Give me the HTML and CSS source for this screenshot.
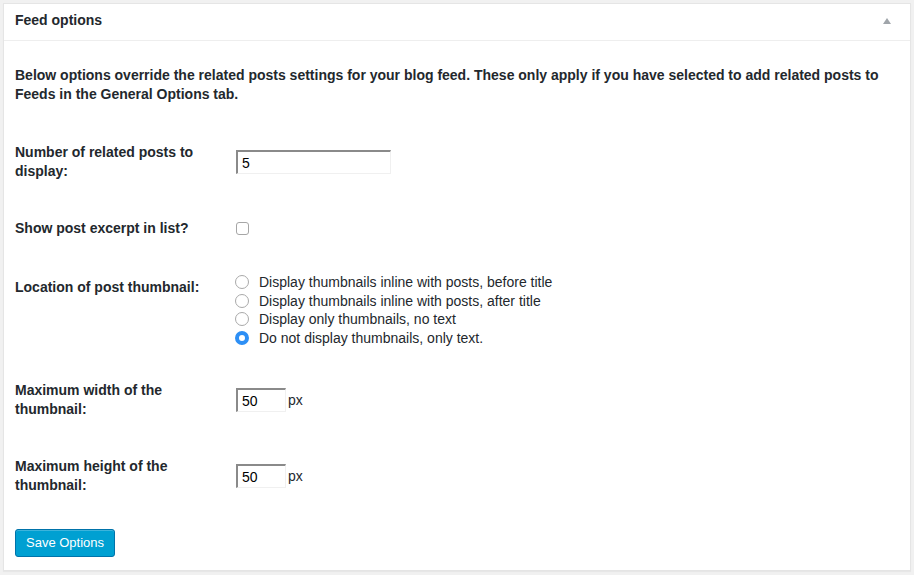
FILE: index.html
```html
<!DOCTYPE html>
<html>
<head>
<meta charset="utf-8">
<title>Feed options</title>
<link rel="stylesheet" href="styles.css">
</head>
<body>
<div class="postbox">
  <div class="hndle">
    <h3 class="hndle-title">Feed options</h3>
    <svg class="toggle" width="8" height="6" viewBox="0 0 8 6"><polygon points="4,0 8,6 0,6" fill="#a0a5aa"/></svg>
  </div>
  <div class="inside">
    <p class="desc">Below options override the related posts settings for your blog feed. These only apply if you have selected to add related posts to Feeds in the General Options tab.</p>
    <div class="form-table">
      <div class="row">
        <div class="label">Number of related posts to display:</div>
        <div class="field"><input class="text wide" type="text" value="5"></div>
      </div>
      <div class="row">
        <div class="label">Show post excerpt in list?</div>
        <div class="field"><span class="checkbox"></span></div>
      </div>
      <div class="row row-top">
        <div class="label label-offset">Location of post thumbnail:</div>
        <div class="field radios">
          <div class="radio-line"><span class="radio"></span>Display thumbnails inline with posts, before title</div>
          <div class="radio-line"><span class="radio"></span>Display thumbnails inline with posts, after title</div>
          <div class="radio-line"><span class="radio"></span>Display only thumbnails, no text</div>
          <div class="radio-line"><span class="radio checked"></span>Do not display thumbnails, only text.</div>
        </div>
      </div>
      <div class="row">
        <div class="label">Maximum width of the thumbnail:</div>
        <div class="field"><input class="text small" type="text" value="50"><span class="unit">px</span></div>
      </div>
      <div class="row">
        <div class="label">Maximum height of the thumbnail:</div>
        <div class="field"><input class="text small" type="text" value="50"><span class="unit">px</span></div>
      </div>
    </div>
    <button class="button-primary">Save Options</button>
  </div>
</div>
</body>
</html>
```
FILE: styles.css
```css
html, body {
  margin: 0;
  padding: 0;
}
body {
  background: #f1f1f1;
  font-family: "Liberation Sans", Arial, sans-serif;
  color: #23282d;
  font-size: 14px;
}
.postbox {
  margin: 3px 3px 4px 3px;
  background: #fff;
  border: 1px solid #e5e5e5;
  box-shadow: 0 1px 1px rgba(0,0,0,0.04);
}
.hndle {
  display: flex;
  align-items: center;
  justify-content: space-between;
  padding: 6px 19px 10px 11px;
  border-bottom: 1px solid #eee;
}
.hndle-title {
  margin: 0;
  font-size: 14px;
  line-height: 20px;
  font-weight: bold;
}
.toggle {
  display: block;
  margin-top: 2px;
}
.inside {
  padding: 25px 11px 13px 11px;
}
.desc {
  margin: 0 0 20px 0;
  font-size: 14px;
  line-height: 19px;
  font-weight: bold;
}
.row {
  display: grid;
  grid-template-columns: 221px 1fr;
  align-items: center;
  padding: 19px 0;
}
.row-top {
  align-items: start;
  padding: 16px 0 15px 0;
}
.label {
  width: 200px;
  font-weight: bold;
  font-size: 14px;
  line-height: 19px;
}
.label-offset {
  margin-top: 5px;
}
.field {
  display: flex;
  align-items: center;
}
.text {
  box-sizing: border-box;
  height: 24px;
  margin: 0;
  padding: 0 4px;
  font-family: "Liberation Sans", Arial, sans-serif;
  font-size: 14px;
  color: #000;
  background: #fff;
  border: 1px solid #f0f0f0;
  border-top: 2px solid #8a8a8a;
  border-left: 2px solid #8a8a8a;
  border-radius: 0;
  outline: none;
}
.wide {
  width: 155px;
}
.small {
  width: 50px;
}
.unit {
  margin-left: 2px;
  font-size: 14px;
}
.checkbox {
  display: block;
  box-sizing: border-box;
  width: 13px;
  height: 13px;
  border: 1px solid #a6a6a6;
  border-radius: 3px;
  background: #fff;
}
.radios {
  display: block;
  margin-left: -1px;
}
.radio-line {
  display: flex;
  align-items: center;
  height: 18.5px;
  font-size: 14px;
  line-height: 18.5px;
}
.radio {
  box-sizing: border-box;
  width: 14px;
  height: 14px;
  margin-right: 10px;
  border-radius: 50%;
  border: 1px solid #a9a9a9;
  background: #fff;
  flex: none;
}
.radio.checked {
  border: 4.5px solid #2d8ff5;
  background: #fff;
}
.button-primary {
  display: block;
  margin-top: 15px;
  height: 28px;
  padding: 0 10px;
  font-family: "Liberation Sans", Arial, sans-serif;
  font-size: 13px;
  line-height: 26px;
  color: #fff;
  background: #00a0d2;
  border: 1px solid #0073aa;
  border-radius: 3px;
  box-shadow: inset 0 1px 0 rgba(120,200,230,0.5);
}
```
